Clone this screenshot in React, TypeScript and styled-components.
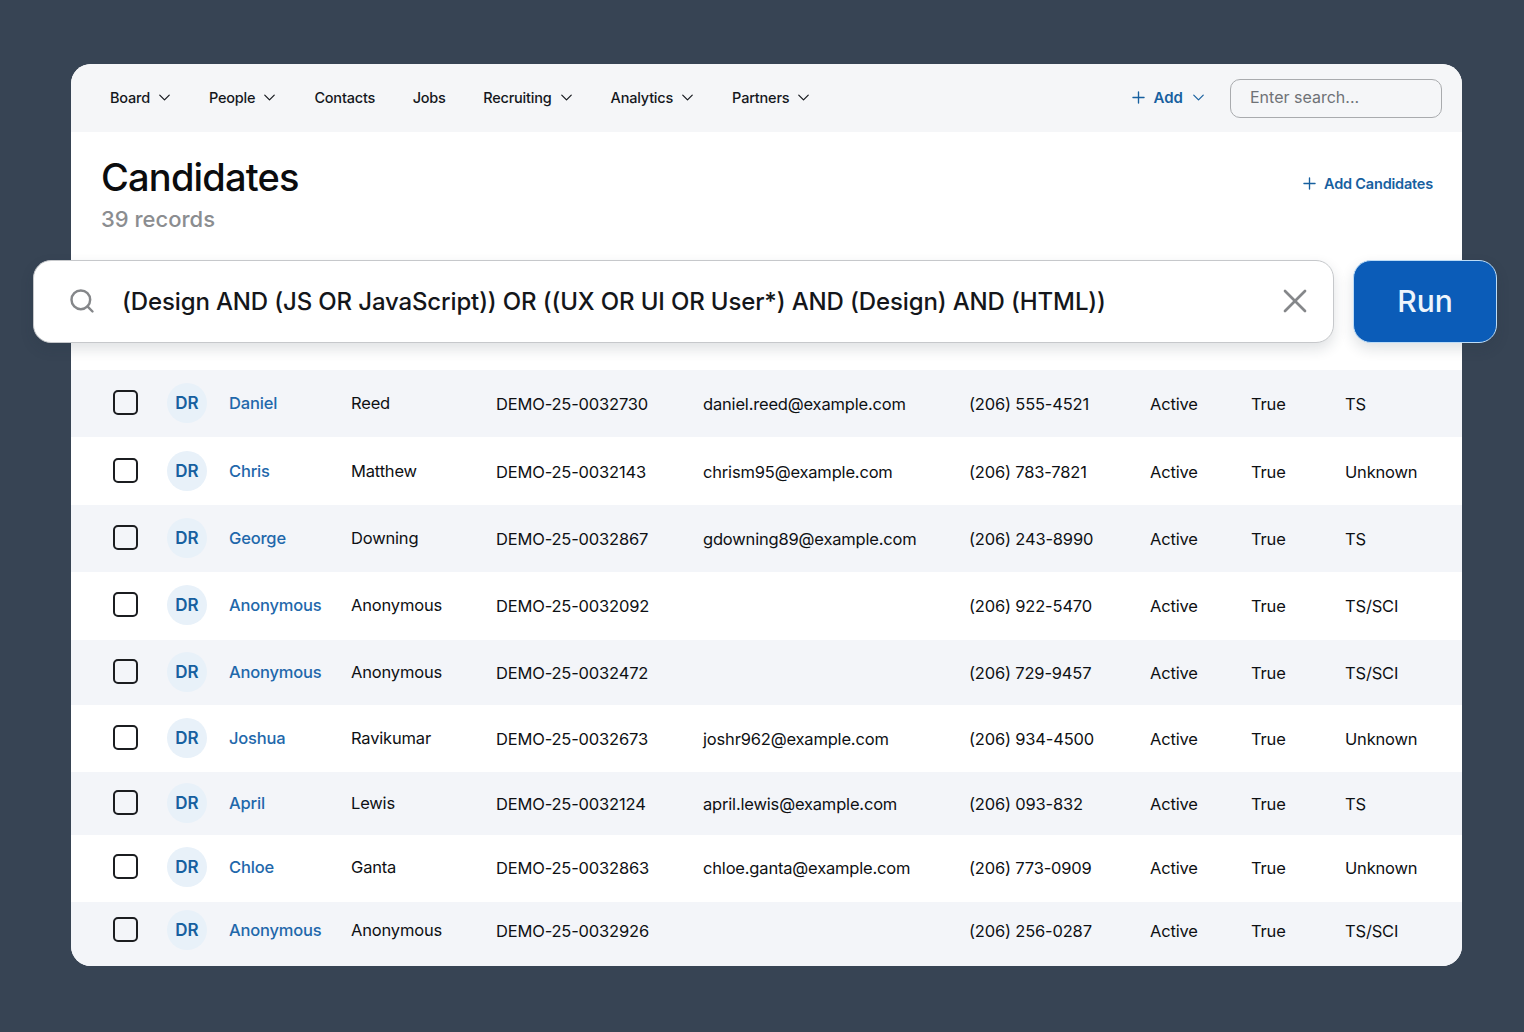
import React from 'react';
import styled, { createGlobalStyle } from 'styled-components';
import { ChevronDown, Plus, Search, X } from 'lucide-react';

const GlobalStyle = createGlobalStyle`
  html, body {
    margin: 0;
    padding: 0;
    background: #374454;
    font-family: Inter, "Noto Sans", sans-serif;
  }
`;

const NAV_ITEMS = [
  { label: 'Board', menu: true },
  { label: 'People', menu: true },
  { label: 'Contacts', menu: false },
  { label: 'Jobs', menu: false },
  { label: 'Recruiting', menu: true },
  { label: 'Analytics', menu: true },
  { label: 'Partners', menu: true },
];

const ROWS = [
  { first: 'Daniel', last: 'Reed', id: 'DEMO-25-0032730', email: 'daniel.reed@example.com', phone: '(206) 555-4521', clearance: 'TS', height: 67, lift: 1 },
  { first: 'Chris', last: 'Matthew', id: 'DEMO-25-0032143', email: 'chrism95@example.com', phone: '(206) 783-7821', clearance: 'Unknown', height: 68, lift: 0 },
  { first: 'George', last: 'Downing', id: 'DEMO-25-0032867', email: 'gdowning89@example.com', phone: '(206) 243-8990', clearance: 'TS', height: 67, lift: 1 },
  { first: 'Anonymous', last: 'Anonymous', id: 'DEMO-25-0032092', email: '', phone: '(206) 922-5470', clearance: 'TS/SCI', height: 68, lift: 2 },
  { first: 'Anonymous', last: 'Anonymous', id: 'DEMO-25-0032472', email: '', phone: '(206) 729-9457', clearance: 'TS/SCI', height: 65, lift: 1 },
  { first: 'Joshua', last: 'Ravikumar', id: 'DEMO-25-0032673', email: 'joshr962@example.com', phone: '(206) 934-4500', clearance: 'Unknown', height: 67, lift: 1 },
  { first: 'April', last: 'Lewis', id: 'DEMO-25-0032124', email: 'april.lewis@example.com', phone: '(206) 093-832', clearance: 'TS', height: 63, lift: 1 },
  { first: 'Chloe', last: 'Ganta', id: 'DEMO-25-0032863', email: 'chloe.ganta@example.com', phone: '(206) 773-0909', clearance: 'Unknown', height: 67, lift: 3 },
  { first: 'Anonymous', last: 'Anonymous', id: 'DEMO-25-0032926', email: '', phone: '(206) 256-0287', clearance: 'TS/SCI', height: 64, lift: 8 },
];

const Page = styled.div`
  width: 1524px;
  height: 1032px;
  padding: 64px 62px 0 71px;
  box-sizing: border-box;
  overflow: hidden;
`;

const Card = styled.main`
  width: 1391px;
  height: 902px;
  background: #fff;
  border-radius: 20px;
`;

const Nav = styled.nav`
  height: 68px;
  padding: 0 20px 0 39px;
  display: flex;
  align-items: center;
  background: #f5f6f8;
  border-radius: 20px 20px 0 0;
`;

const NavList = styled.div`
  display: flex;
  align-items: center;
  flex: 1;
  padding-bottom: 2px;
`;

const NavItem = styled.div<{ $menu: boolean }>`
  display: flex;
  align-items: center;
  gap: 5px;
  height: 24px;
  margin-right: ${(p) => (p.$menu ? 35 : 37.5)}px;
  font-size: 14.5px;
  letter-spacing: -0.2px;
  font-weight: 500;
  color: #14171c;
`;

const AddMenu = styled.div`
  display: flex;
  align-items: center;
  gap: 6px;
  margin-right: 22px;
  padding-bottom: 2px;
  font-size: 15px;
  font-weight: 600;
  color: #17609f;
`;

const NavSearch = styled.div`
  width: 212px;
  height: 39px;
  padding: 0 0 2px 19px;
  display: flex;
  align-items: center;
  box-sizing: border-box;
  border: 1.5px solid #a9abae;
  border-radius: 10px;
  font-size: 16px;
  color: #6f7276;
`;

const Header = styled.header`
  height: 128px;
  padding: 21px 29px 0 30px;
  display: flex;
  justify-content: space-between;
  box-sizing: border-box;
`;

const Title = styled.h1`
  margin: 0;
  font-size: 38px;
  line-height: 48px;
  letter-spacing: -0.8px;
  font-weight: 500;
  color: #0b0c0e;
`;

const Count = styled.div`
  margin-top: 3px;
  font-size: 22px;
  line-height: 30px;
  font-weight: 500;
  color: #8b8d90;
`;

const AddCandidates = styled.div`
  height: 22px;
  margin-top: 19px;
  display: flex;
  align-items: center;
  gap: 5px;
  font-size: 14.5px;
  letter-spacing: -0.2px;
  font-weight: 600;
  color: #17609f;
`;

const QueryRow = styled.section`
  margin: 0 -35px 0 -38px;
  display: flex;
  gap: 19px;
  position: relative;
`;

const QueryBox = styled.div`
  width: 1301px;
  height: 83px;
  padding: 0 18px 2px 34px;
  display: flex;
  align-items: center;
  box-sizing: border-box;
  background: #fff;
  border: 1.5px solid #c6c8cb;
  border-radius: 18px;
  box-shadow: 0 6px 14px rgba(30, 40, 55, 0.14);
  color: #85878a;
`;

const QueryText = styled.div`
  flex: 1;
  margin-left: 26px;
  padding-top: 2px;
  font-size: 24px;
  letter-spacing: -0.14px;
  font-weight: 450;
  color: #14161a;
  white-space: nowrap;
`;

const RunButton = styled.button`
  width: 144px;
  height: 83px;
  padding: 0 0 2px;
  background: #0b5cb8;
  border: 1.5px solid #bcdcf7;
  border-radius: 18px;
  box-shadow: 0 6px 14px rgba(30, 40, 55, 0.14);
  font-family: inherit;
  font-size: 30px;
  font-weight: 500;
  color: #eef5fc;
`;

const Table = styled.section`
  margin-top: 27px;
  border-radius: 0 0 20px 20px;
  overflow: hidden;
`;

const Row = styled.div<{ $height: number; $lift: number; $tinted: boolean }>`
  height: ${(p) => p.$height}px;
  padding: 0 0 ${(p) => p.$lift}px 43px;
  box-sizing: border-box;
  display: grid;
  grid-template-columns: 53px 62px 122px 145px 207px 266px 181px 101px 94px 1fr;
  align-items: center;
  background: ${(p) => (p.$tinted ? '#f3f5f9' : '#fff')};
  font-size: 16.5px;
  letter-spacing: -0.18px;
  color: #0e1013;
`;

const CheckBox = styled.div`
  width: 25px;
  height: 25px;
  margin: 0 0 2px -1px;
  box-sizing: border-box;
  border: 2.2px solid #1b1d20;
  border-radius: 5px;
`;

const Avatar = styled.div`
  width: 40px;
  height: 40px;
  display: flex;
  align-items: center;
  justify-content: center;
  background: #e8f1f9;
  border-radius: 50%;
  font-size: 17px;
  letter-spacing: 0;
  font-weight: 600;
  color: #17609f;
`;

const NameLink = styled.div`
  font-weight: 500;
  color: #1f68ab;
`;

const Cell = styled.div<{ $nudge?: boolean }>`
  white-space: nowrap;
  padding-top: ${(p) => (p.$nudge ? 2 : 0)}px;
`;

export default function App() {
  return (
    <Page>
      <GlobalStyle />
      <Card>
        <Nav>
          <NavList>
            {NAV_ITEMS.map((item) => (
              <NavItem key={item.label} $menu={item.menu}>
                {item.label}
                {item.menu && <ChevronDown size={19} strokeWidth={1.5} />}
              </NavItem>
            ))}
          </NavList>
          <AddMenu>
            <Plus size={19} strokeWidth={1.7} />
            Add
            <ChevronDown size={19} strokeWidth={1.5} />
          </AddMenu>
          <NavSearch>Enter search...</NavSearch>
        </Nav>
        <Header>
          <div>
            <Title>Candidates</Title>
            <Count>39 records</Count>
          </div>
          <AddCandidates>
            <Plus size={19} strokeWidth={1.7} />
            Add Candidates
          </AddCandidates>
        </Header>
        <QueryRow>
          <QueryBox>
            <Search size={28} strokeWidth={2.1} />
            <QueryText>(Design AND (JS OR JavaScript)) OR ((UX OR UI OR User*) AND (Design) AND (HTML))</QueryText>
            <X size={40} strokeWidth={1.6} />
          </QueryBox>
          <RunButton>Run</RunButton>
        </QueryRow>
        <Table>
          {ROWS.map((row, i) => (
            <Row key={row.id} $height={row.height} $lift={row.lift} $tinted={i % 2 === 0}>
              <CheckBox />
              <Avatar>DR</Avatar>
              <NameLink>{row.first}</NameLink>
              <Cell>{row.last}</Cell>
              <Cell $nudge>{row.id}</Cell>
              <Cell $nudge>{row.email}</Cell>
              <Cell $nudge>{row.phone}</Cell>
              <Cell $nudge>Active</Cell>
              <Cell $nudge>True</Cell>
              <Cell $nudge>{row.clearance}</Cell>
            </Row>
          ))}
        </Table>
      </Card>
    </Page>
  );
}
